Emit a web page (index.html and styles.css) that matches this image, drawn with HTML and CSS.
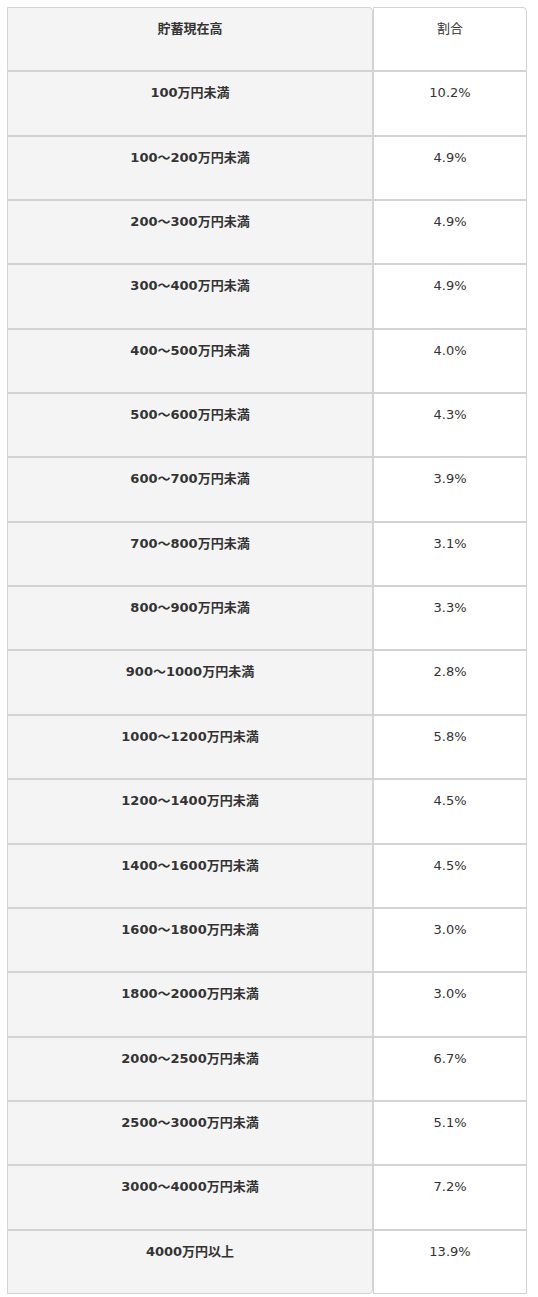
FILE: index.html
```html
<!DOCTYPE html>
<html lang="ja">
<head>
<meta charset="utf-8">
<title>貯蓄現在高</title>
<link rel="stylesheet" href="styles.css">
</head>
<body>
<div class="wrap">
  <div class="tbl">
    <div class="cell head-l">貯蓄現在高</div>
    <div class="cell head-r">割合</div>
    <div class="cell lab">100万円未満</div><div class="cell val">10.2%</div>
    <div class="cell lab">100～200万円未満</div><div class="cell val">4.9%</div>
    <div class="cell lab">200～300万円未満</div><div class="cell val">4.9%</div>
    <div class="cell lab">300～400万円未満</div><div class="cell val">4.9%</div>
    <div class="cell lab">400～500万円未満</div><div class="cell val">4.0%</div>
    <div class="cell lab">500～600万円未満</div><div class="cell val">4.3%</div>
    <div class="cell lab">600～700万円未満</div><div class="cell val">3.9%</div>
    <div class="cell lab">700～800万円未満</div><div class="cell val">3.1%</div>
    <div class="cell lab">800～900万円未満</div><div class="cell val">3.3%</div>
    <div class="cell lab">900～1000万円未満</div><div class="cell val">2.8%</div>
    <div class="cell lab">1000～1200万円未満</div><div class="cell val">5.8%</div>
    <div class="cell lab">1200～1400万円未満</div><div class="cell val">4.5%</div>
    <div class="cell lab">1400～1600万円未満</div><div class="cell val">4.5%</div>
    <div class="cell lab">1600～1800万円未満</div><div class="cell val">3.0%</div>
    <div class="cell lab">1800～2000万円未満</div><div class="cell val">3.0%</div>
    <div class="cell lab">2000～2500万円未満</div><div class="cell val">6.7%</div>
    <div class="cell lab">2500～3000万円未満</div><div class="cell val">5.1%</div>
    <div class="cell lab">3000～4000万円未満</div><div class="cell val">7.2%</div>
    <div class="cell lab last-l">4000万円以上</div><div class="cell val last-r">13.9%</div>
  </div>
</div>
</body>
</html>
```

FILE: styles.css
```css
html, body {
  margin: 0;
  padding: 0;
  background: #ffffff;
}

.wrap {
  padding: 7px;
}

.tbl {
  display: grid;
  grid-template-columns: 366px 154px;
  grid-template-rows: repeat(20, 1fr);
  height: 1287px;
  font-family: "DejaVu Sans", "Noto Sans CJK JP", sans-serif;
  font-size: 13px;
  line-height: 20px;
  color: #333333;
}

.cell {
  border: 1px solid #d3d3d3;
  padding: 11px 8px 0;
  text-align: center;
}

.lab, .head-l {
  background: #f4f4f4;
  font-weight: bold;
}

.val, .head-r {
  background: #ffffff;
  font-weight: normal;
}

.head-l {
  border-top-right-radius: 4px;
}

.head-r {
  border-top-right-radius: 4px;
}

.last-l {
  border-bottom-right-radius: 4px;
}
```
